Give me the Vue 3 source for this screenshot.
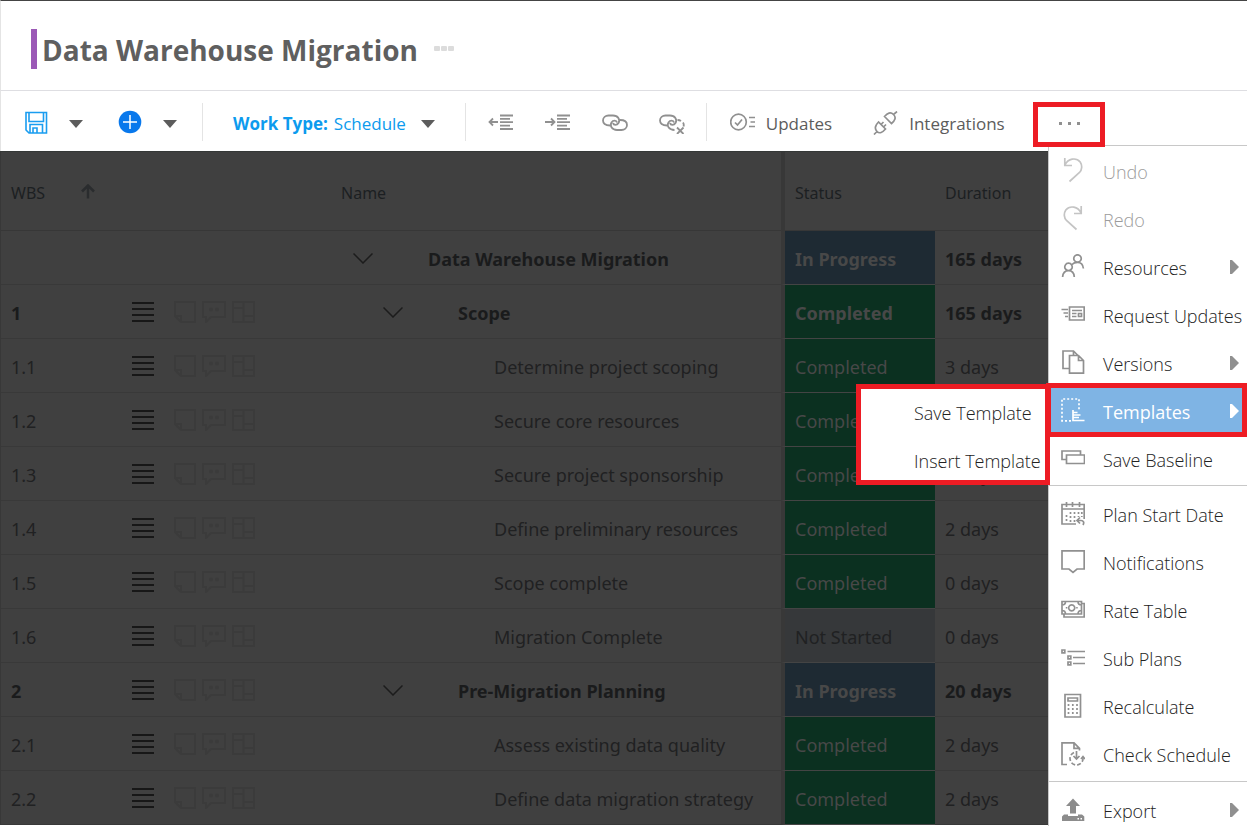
<script setup>
const rows = [
  { wbs: '', name: 'Data Warehouse Migration', level: 0, status: 'In Progress', duration: '165 days' },
  { wbs: '1', name: 'Scope', level: 1, status: 'Completed', duration: '165 days' },
  { wbs: '1.1', name: 'Determine project scoping', level: 2, status: 'Completed', duration: '3 days' },
  { wbs: '1.2', name: 'Secure core resources', level: 2, status: 'Completed', duration: '3 days' },
  { wbs: '1.3', name: 'Secure project sponsorship', level: 2, status: 'Completed', duration: '2 days' },
  { wbs: '1.4', name: 'Define preliminary resources', level: 2, status: 'Completed', duration: '2 days' },
  { wbs: '1.5', name: 'Scope complete', level: 2, status: 'Completed', duration: '0 days' },
  { wbs: '1.6', name: 'Migration Complete', level: 2, status: 'Not Started', duration: '0 days' },
  { wbs: '2', name: 'Pre-Migration Planning', level: 1, status: 'In Progress', duration: '20 days' },
  { wbs: '2.1', name: 'Assess existing data quality', level: 2, status: 'Completed', duration: '2 days' },
  { wbs: '2.2', name: 'Define data migration strategy', level: 2, status: 'Completed', duration: '2 days' },
]

const statusClass = (s) => s.toLowerCase().replace(' ', '-')

// Each menu icon: s = stroked path, d = dotted path, d2 = dashed path, f = filled path
const groups = [
  [
    { label: 'Undo', disabled: true, s: 'M3.8 0V7.5H11M4 7C7 .5 15-1 19.2 4C21.5 7.5 21 12 18.5 14.5L8.5 23.5' },
    { label: 'Redo', disabled: true, s: 'M20.2 0V7.5H13M20 7C17 .5 9-1 4.8 4C2.5 7.5 3 12 5.5 14.5L15.5 23.5' },
    { label: 'Resources', sub: true, s: 'M7.5 9.2a3.7 3.7 0 1 0 .01 0ZM1.6 23C2 18.6 4 16.7 7.5 16.7S13 18.6 13.3 23M16.5.8a3.7 3.7 0 1 0 .01 0ZM11 10.5C12.5 8.8 14.5 8.3 16.5 8.3C20 8.3 22 10.3 22.4 14.5' },
    { label: 'Request Updates', s: 'M8.5 5H23.2V18H8.5ZM.5 7.5H7M2.5 11H7M4 14.5H7M11 8.5H21M11 11.5H15.5M11 14.5H15.5M17.5 11.5H20.5V14.5H17.5Z' },
    { label: 'Versions', sub: true, s: 'M8 18.5H2V1H12.5L17 5.5M12.5 1V5M8.5 5.5H17.5L22.5 10.5V23.2H8.5ZM17.5 5.5V10.5H22.5' },
    { label: 'Templates', sub: true, active: true, d: 'M10 22.8H1V1H18V12', s: 'M12 12V23.2M12 14.5H16.5M12 17H19.5M12 19.5H18M11.3 22.5H23.5' },
    { label: 'Save Baseline', s: 'M5.5 13.5H1V5H19.5V9M5.5 9H23.5V17.5H5.5Z' },
  ],
  [
    { label: 'Plan Start Date', s: 'M15 23H1V3.5H23.2V18M1 8H23.2M5.5 1V6M11.5 1V6M18.5 1V6M19 16.5L16 19.5L19 22.5M16 19.5H20C22.5 19.5 23.5 21.5 22 24', d: 'M9.5 11V21M13.5 11V21M17.5 11V16M5.5 14V21M20.8 11V16' },
    { label: 'Notifications', s: 'M1 1.8H23.2V20H16L12 23.4L8 20H1Z' },
    { label: 'Rate Table', s: 'M1 4.5H20.5V17H1ZM3 17V20H23.2V6.5H20.5M10.7 7.8a3 3 0 1 0 .01 0ZM1 8C3.5 8 4.5 7 4.5 4.5M17 4.5C17 7 18 8 20.5 8M1 13.5C3.5 13.5 4.5 14.5 4.5 17M17 17C17 14.5 18 13.5 20.5 13.5', f: 'M4.8 10h1.5v1.5h-1.5zM15.2 10h1.5v1.5h-1.5z' },
    { label: 'Sub Plans', s: 'M1 5H3.8V7.8H1ZM7 11H9.8V13.8H7ZM7 17H9.8V19.8H7ZM6.5 6.5H24M12 12.5H24M12 18.5H24' },
    { label: 'Recalculate', s: 'M4 1.5H19.5V24H4ZM7 5H16.5V8H7Z', d: 'M7.5 11V22M11.8 11V22M16 11V22' },
    { label: 'Check Schedule', s: 'M6 23.5H1V1.8H13L18.5 7.3V9.5M13 1.8V7.3H18.5M15.5 10V17.5M12.5 15L15.5 18L18.5 15M20 18L22 15.5L24 18', d2: 'M13 11.5A6.5 6.5 0 1 0 22 17' },
  ],
  [
    { label: 'Export', sub: true, f: 'M12 1.5L19 9H15V16.5H9V9H5ZM3 17.5H7V19H17V17.5H21L23.3 19.5V24H1V19.5ZM16.5 21V22.5H18V21ZM19.5 21V22.5H21V21Z' },
  ],
]
</script>

<template>
  <div class="page">
    <header class="title-bar">
      <h1>Data Warehouse Migration</h1>
      <button class="title-more" aria-label="Project options"><i></i><i></i><i></i></button>
    </header>

    <div class="toolbar">
      <div class="group files">
        <button aria-label="Save">
          <svg class="blue" width="23" height="23" viewBox="0 0 23 23"><path d="M1 1.5H21.5V22H4L1 19ZM4 1.5V10.5H18.5V1.5M5 22V13.5H17.5V22M8 22V17H12V22" /></svg>
        </button>
        <button aria-label="Save options"><svg class="caret" width="14" height="8" viewBox="0 0 14 8"><path d="M0 0H14L7 8Z" /></svg></button>
        <button class="add" aria-label="Add">
          <svg width="24" height="24" viewBox="0 0 24 24"><circle cx="12" cy="12" r="11.3" fill="#0878ec" stroke="none" /><path d="M12 5V19M5 12H19" stroke="#fff" stroke-width="1.5" /></svg>
        </button>
        <button aria-label="Add options"><svg class="caret" width="14" height="8" viewBox="0 0 14 8"><path d="M0 0H14L7 8Z" /></svg></button>
      </div>

      <div class="group work">
        <label for="work-type">Work Type:</label>
        <select id="work-type"><option>Schedule</option></select>
        <svg class="caret" width="14" height="8" viewBox="0 0 14 8"><path d="M0 0H14L7 8Z" /></svg>
      </div>

      <div class="group edit">
        <button aria-label="Outdent">
          <svg width="26" height="22" viewBox="0 0 26 22"><path d="M1 10H10M5 6.5L1.5 10L5 13.5M12 3.5H25M12 6.8H22M12 10.2H25M12 13.6H22M12 17H25" /></svg>
        </button>
        <button aria-label="Indent">
          <svg width="26" height="22" viewBox="0 0 26 22"><path d="M0 10H9.5M6 6.5L9.5 10L6 13.5M12 3.5H25M12 6.8H22M12 10.2H25M12 13.6H22M12 17H25" /></svg>
        </button>
        <button aria-label="Link">
          <svg width="26" height="22" viewBox="0 0 26 22"><path d="M8 13.5C3 13.5 1 11 1 8.5C1 5.5 3.5 3.5 6.5 3.5H11C16 3.5 18.5 7.5 16.5 11C15 13.5 11.5 13.5 11 11" /><path d="M18 8C23 8 25 10.5 25 13C25 16 22.5 18 19.5 18H15C10 18 7.5 14 9.5 10.5C11 8 14.5 8 15 10.5" /></svg>
        </button>
        <button aria-label="Unlink">
          <svg width="26" height="22" viewBox="0 0 26 22"><path d="M8 13.5C3 13.5 1 11 1 8.5C1 5.5 3.5 3.5 6.5 3.5H11C16 3.5 18.5 7.5 16.5 11C15 13.5 11.5 13.5 11 11" /><path d="M15.5 18C10 18 7.5 14 9.5 10.5C11 8 14.5 8 15 10.5M18.5 8C20 8 21 8.3 22 9M24 10.5C25 12 25 13 24.5 14.5" /><path d="M18 15.5L24.5 22M24.5 15.5L18 22" /></svg>
        </button>
      </div>

      <div class="group links">
        <button>
          <svg width="25" height="24" viewBox="0 0 25 24"><circle cx="8.5" cy="11" r="7.8" /><path d="M5 11.5L7.5 14L12 8.5M19 6.5H25M20.5 11H25M19 15.5H25" /></svg>
          <span>Updates</span>
        </button>
        <button>
          <svg width="25" height="24" viewBox="0 0 25 24"><path d="M1 23.5L4 20.5M4 20.5C1 17.5 2.5 14 5.5 11L12.5 18C9.5 21.5 6.5 23 4 20.5M8 13.5L10.5 11M10.5 16L13 13.5M11.5 5.5L18.5 12.5C22 9.5 23.5 6.5 20.5 3.5C17.5 .5 14.5 2 11.5 5.5ZM20.5 3.5L24 .5" /></svg>
          <span>Integrations</span>
        </button>
      </div>

      <button class="more" aria-label="More" aria-expanded="true">
        <svg width="22" height="4" viewBox="0 0 22 4"><path d="M0 1H3V4H0ZM9 1H12V4H9ZM18 1H21V4H18Z" /></svg>
      </button>

      <nav class="menu" aria-label="More actions">
        <ul v-for="(g, i) in groups" :key="i">
          <li v-for="item in g" :key="item.label" :class="{ active: item.active }">
            <button :disabled="item.disabled">
              <svg class="icon" width="24" height="25" viewBox="0 0 24 25">
                <path v-if="item.s" :d="item.s" />
                <path v-if="item.d" :d="item.d" class="dotted" />
                <path v-if="item.d2" :d="item.d2" class="dashed" />
                <path v-if="item.f" :d="item.f" class="solid" />
              </svg>
              <span>{{ item.label }}</span>
              <svg v-if="item.sub" class="arrow" width="9" height="14" viewBox="0 0 9 14"><path d="M0 0H2L9 7L2 14H0Z" /></svg>
            </button>
            <ul v-if="item.active" class="submenu">
              <li><button>Save Template</button></li>
              <li><button>Insert Template</button></li>
            </ul>
          </li>
        </ul>
      </nav>
    </div>

    <main>
      <table>
        <colgroup><col class="c-wbs" /><col class="c-tools" /><col class="c-name" /><col class="c-status" /><col /></colgroup>
        <thead>
          <tr>
            <th>WBS <svg class="sort" width="14" height="15" viewBox="0 0 14 15"><path d="M7 14.5V2M1 7.5L7 1.5L13 7.5" /></svg></th>
            <th></th>
            <th>Name</th>
            <th class="split">Status</th>
            <th>Duration</th>
          </tr>
        </thead>
        <tbody>
          <tr v-for="(r, i) in rows" :key="i" :class="{ summary: r.level < 2 }">
            <td>{{ r.wbs }}</td>
            <td class="tools">
              <div v-if="r.wbs">
                <svg width="22" height="22" viewBox="0 0 22 22"><path class="lines" d="M0 2H22M0 8H22M0 14H22M0 20H22" /></svg>
                <svg width="22" height="22" viewBox="0 0 22 22"><path d="M1 1H21V21H7L1 15ZM1 15H7V21" /></svg>
                <svg width="24" height="22" viewBox="0 0 24 22"><path d="M1 1H23V16H9L4 21V16H1Z" /><circle cx="9" cy="8.5" r="2" /><circle cx="15" cy="8.5" r="2" /></svg>
                <svg width="23" height="22" viewBox="0 0 23 22"><path d="M1 1H22V21H1ZM11.5 1V21M1 7H11.5M11.5 15H22" /></svg>
              </div>
            </td>
            <td>
              <div class="name" :class="'level-' + r.level">
                <button v-if="r.level < 2" aria-label="Collapse"><svg width="20" height="11" viewBox="0 0 20 11"><path d="M.5 .5L10 10L19.5 .5" /></svg></button>
                <span>{{ r.name }}</span>
              </div>
            </td>
            <td class="split status" :class="statusClass(r.status)">{{ r.status }}</td>
            <td>{{ r.duration }}</td>
          </tr>
        </tbody>
      </table>
    </main>
  </div>
</template>

<style>
body { margin: 0; }
</style>

<style scoped>
.page { height: 100vh; overflow: hidden; background: #fff; font-family: "Open Sans", "Noto Sans", sans-serif; color: #5c5c5c; }
.page * { box-sizing: border-box; }
button, select { font: inherit; color: inherit; background: none; border: 0; padding: 0; margin: 0; cursor: pointer; }
button { display: flex; align-items: center; }
svg { display: block; flex: none; fill: none; stroke: #909090; stroke-width: 2; }
ul { list-style: none; margin: 0; padding: 0; }

.title-bar { display: flex; align-items: center; gap: 16px; height: 91px; padding: 6px 30px 0; border-top: 1px solid #444; border-left: 1px solid #e4e4e4; border-bottom: 1px solid #dedee2; }
h1 { margin: 0; padding: 2px 0 0 5px; border-left: 6px solid #9b59b6; font-size: 28px; line-height: 38px; font-weight: 700; color: #5f5f5f; white-space: nowrap; }
.title-more { gap: 1px; }
.title-more i { width: 6px; height: 5px; border-radius: 1px; background: #dcdcdc; }

.toolbar { position: relative; display: flex; align-items: center; height: 60px; border-left: 1px solid #e4e4e4; font-size: 17px; white-space: nowrap; padding: 2px 0 0 24px; }
.group { display: flex; align-items: center; height: 38px; }
.files, .work, .edit { border-right: 1px solid #e4e4e4; }
.files { gap: 21px; padding-right: 25px; }
.add { margin-left: 14px; }
.blue { stroke: #1a9df0; stroke-width: 1.6; }
.caret { fill: #5c5c5c; stroke: none; margin-top: 4px; }
.work { padding: 0 30px; gap: 6px; color: #0c9bee; }
.work label { font-weight: 700; }
.work label, .work select, .links span { line-height: 24px; margin-top: 4px; }
.work select { appearance: none; }
.work .caret { margin-left: 8px; }
.edit { gap: 31px; padding: 0 21px 0 22px; }
.edit svg { stroke-width: 1.8; margin-top: 2px; }
.links { gap: 41px; padding: 0 28px 0 23px; }
.links button { gap: 11px; }
.links svg { stroke-width: 1.7; margin-top: 2px; }
.more { position: relative; z-index: 3; justify-content: center; width: 72px; height: 45px; margin-top: 5px; border: 5px solid #ed1c24; background: #fff; }
.more svg { fill: #909090; stroke: none; margin: 0 0 4px 2px; }

.menu { position: absolute; z-index: 2; top: 54px; right: 0; width: 199px; padding-top: 2px; background: #fff; border: 1px solid #c8c8c8; border-width: 1px 0 0 1px; font-size: 18px; font-weight: 300; color: #222; }
.menu > ul { padding-bottom: 1px; }
.menu > ul + ul { padding: 5px 0 2px; border-top: 1px solid #c8c8c8; }
.menu li { position: relative; }
.menu > ul > li > button { position: relative; width: 100%; height: 48px; padding: 0 0 0 12px; gap: 18px; }
.menu button:disabled { color: #9c9c9c; cursor: default; }
.menu button:disabled .icon { stroke: #c4c4c4; }
.icon { margin-bottom: 3px; stroke-width: 1.7; }
.dotted { stroke-dasharray: 2 2; }
.dashed { stroke-dasharray: 4 2; }
.solid { fill: #8c8c8c; stroke: none; fill-rule: evenodd; }
.arrow { position: absolute; right: 8px; top: 16px; fill: #909090; stroke: none; }
.menu .active > button { background: #7fb4e4; color: #fff; font-weight: 400; }
.active .icon { stroke: #fff; }
.active .arrow { fill: #fff; }
.active::after { content: ""; position: absolute; inset: -5px 0 -1px -3px; border: 5px solid #ed1c24; pointer-events: none; }
.submenu { position: absolute; right: calc(100% - 1px); top: -4px; width: 194px; background: #fff; border: 5px solid #ed1c24; }
.submenu button { width: 100%; padding: 12px 0 12px 53px; line-height: 24px; }
.submenu li:last-child button { padding-bottom: 7px; }

table { width: 100%; table-layout: fixed; border-spacing: 0; background: #404040; border-top: 1px solid #353837; border-left: 1px solid #383838; font-family: "Noto Sans", "Open Sans", sans-serif; font-size: 18px; color: #202122; }
.c-wbs { width: 130px; }
.c-tools { width: 200px; }
.c-name { width: 450px; }
.c-status { width: 154px; }
th { height: 79px; padding: 4px 10px 0; border-bottom: 1px solid #373737; text-align: left; font-size: 16px; line-height: 24px; font-weight: 400; color: #1c1f22; }
td { height: 54px; padding: 2px 10px 0; border-bottom: 1px solid #393939; line-height: 24px; white-space: nowrap; }
.summary td { font-weight: 700; color: #1a1b1c; }
.sort { display: inline-block; margin-left: 32px; stroke: #2a2c2e; stroke-width: 2.5; }
.tools { padding: 1px 0 0 1px; }
.tools div { display: flex; gap: 6px; }
.tools svg { stroke: #3b3b3b; }
.tools svg:first-child { margin-right: 14px; }
.tools circle { fill: #3b3b3b; stroke: none; }
.tools .lines { stroke: #171717; }
.name { display: flex; align-items: center; }
.name button { margin-right: 55px; }
.name svg { stroke: #1c1c1c; stroke-width: 1.5; }
.level-0 { padding-left: 12px; }
.level-1 { padding-left: 42px; }
.level-2 { padding-left: 153px; }
.split { border-left: 4px solid #383838; }
.status { border-bottom-color: #444; }
.in-progress { background: #1e2a33; }
.completed { background: #0b3020; }
.not-started { background: #36383a; }
tr .in-progress, tr .completed { color: #484848; }
tr.summary .in-progress, tr.summary .completed { color: #484848; }
</style>
